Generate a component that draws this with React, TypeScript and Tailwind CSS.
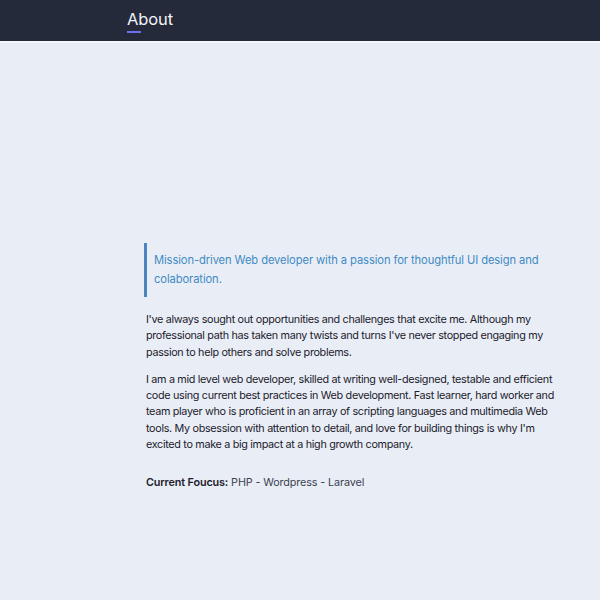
export default function App() {
  return (
    <div className="min-h-[600px] bg-[#e9eef6] font-['Inter',sans-serif]">
      <header className="h-[41px] bg-[#252a3b] border-b-2 border-[#f3f6fb] box-content">
        <div className="pl-[127px] pt-[8px] flex flex-col items-start">
          <span className="text-[16.5px] leading-[22px] tracking-[-0.1px] text-[#f1f3f7]">About</span>
          <span className="mt-[1px] h-[2px] w-[14px] bg-[#6b6ff0]"></span>
        </div>
      </header>
      <main className="pl-[144px] pt-[200px] pr-[42px]">
        <blockquote className="border-l-[3px] border-[#4a85c0] pl-[7px] py-[8px] text-[11.2px] leading-[19px] tracking-[-0.1px] text-[#3f8ac4]">
          Mission-driven Web developer with a passion for thoughtful UI design and colaboration.
        </blockquote>
        <div className="pl-[2px] text-[10.8px] leading-[16.3px] tracking-[-0.32px] text-[#1c202c]">
          <p className="mt-[15px]">
            I've always sought out opportunities and challenges that excite me. Although my professional path has taken many twists and turns I've never stopped engaging my passion to help others and solve problems.
          </p>
          <p className="mt-[11px]">
            I am a mid level web developer, skilled at writing well-designed, testable and efficient code using current best practices in Web development. Fast learner, hard worker and team player who is proficient in an array of scripting languages and multimedia Web tools. My obsession with attention to detail, and love for building things is why I'm excited to make a big impact at a high growth company.
          </p>
          <p className="mt-[22px] tracking-[-0.12px]">
            <span className="font-semibold">Current Foucus:</span>{" "}
            <span className="text-[#3c4150]">PHP - Wordpress - Laravel</span>
          </p>
        </div>
      </main>
    </div>
  );
}
